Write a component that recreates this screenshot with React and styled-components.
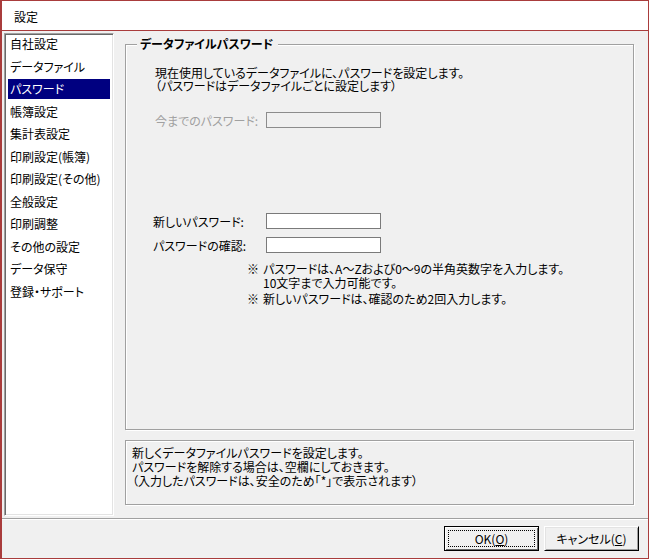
import React from "react";
import styled, { createGlobalStyle } from "styled-components";

const Global = createGlobalStyle`
  html, body { margin: 0; padding: 0; background: #ffffff; }
  body {
    font-family: "Noto Sans CJK JP", "Noto Sans", sans-serif;
    font-size: 12px;
    color: #000;
    font-feature-settings: "palt";
  }
  * { box-sizing: border-box; }
`;

const Window = styled.div`
  width: 649px;
  height: 559px;
  border: 1px solid #a93c3c;
  border-left-width: 2px;
  display: flex;
  flex-direction: column;
  background: #f0f0f0;
`;

const TitleBar = styled.div`
  height: 30px;
  flex: none;
  background: #fff;
  border-bottom: 1px solid #a93c3c;
  display: flex;
  align-items: center;
  padding-left: 12px;
  padding-top: 2px;
  font-size: 12px;
`;

const Main = styled.div`
  flex: 1;
  display: flex;
  gap: 11px;
  padding: 2px 14px 2px 2px;
  min-height: 0;
`;

const ListBox = styled.ul`
  list-style: none;
  margin: 0;
  width: 110px;
  flex: none;
  background: #fff;
  border: 1px solid;
  border-color: #a0a0a0 #fff #fff #a0a0a0;
  box-shadow: inset 1px 1px 0 #696969, inset -1px -1px 0 #e3e3e3;
  padding: 0 3px 1px 3px;
`;

const ListItem = styled.li`
  height: 20px;
  margin-bottom: 2.5px;
  line-height: 19px;
  padding-left: 2px;
  white-space: nowrap;
  background: ${(p) => (p.$selected ? "#000080" : "transparent")};
  color: ${(p) => (p.$selected ? "#fff" : "#000")};
`;

const RightCol = styled.div`
  flex: 1;
  display: flex;
  flex-direction: column;
  padding-top: 11px;
  padding-bottom: 10px;
  gap: 10px;
`;

const GroupBox = styled.div`
  position: relative;
  height: 386px;
  border: 1px solid #a0a0a0;
  box-shadow: inset 1px 1px 0 #fff, 1px 1px 0 #fff;
  padding: 21px 0 0 29px;
`;

const GroupTitle = styled.div`
  position: absolute;
  top: -9px;
  left: 11px;
  padding: 0 5px 0 3px;
  background: #f0f0f0;
  font-weight: bold;
  line-height: 16px;
`;

const Para = styled.p`
  margin: 0;
  line-height: 13px;
  white-space: nowrap;
`;

const FormRow = styled.div`
  display: flex;
  align-items: center;
  height: 16px;
  margin-top: ${(p) => p.$mt}px;
  margin-left: ${(p) => p.$ml || 0}px;
`;

const Label = styled.label`
  width: ${(p) => p.$w}px;
  flex: none;
  white-space: nowrap;
  color: ${(p) => (p.$disabled ? "#a0a0a0" : "#000")};
`;

const TextInput = styled.div`
  width: 115px;
  height: 16px;
  border: 1px solid ${(p) => (p.$disabled ? "#8c8c8c" : "#7a7a7a")};
  background: ${(p) => (p.$disabled ? "#f0f0f0" : "#fff")};
`;

const Note = styled.div`
  display: flex;
  margin-left: 92px;
  margin-top: ${(p) => p.$mt}px;
  line-height: 14px;
  white-space: nowrap;
`;

const NoteMark = styled.span`
  width: 16px;
  flex: none;
`;

const DescBox = styled.div`
  height: 65px;
  border: 1px solid #a0a0a0;
  box-shadow: inset 1px 1px 0 #fff, 1px 1px 0 #fff;
  padding: 5px 0 0 6px;
  line-height: 14px;
  white-space: nowrap;
`;

const Separator = styled.div`
  height: 2px;
  flex: none;
  border-top: 1px solid #a0a0a0;
  border-bottom: 1px solid #fff;
`;

const ButtonBar = styled.div`
  height: 38px;
  flex: none;
  display: flex;
  justify-content: flex-end;
  align-items: flex-start;
  gap: 5px;
  padding: 6px 9px 0 0;
`;

const Button = styled.button`
  position: relative;
  width: 95px;
  height: 25px;
  font-family: inherit;
  font-size: 12px;
  font-feature-settings: "palt";
  color: #000;
  background: #f0f0f0;
  padding: 0;
  border: 1px solid;
  border-color: ${(p) => (p.$default ? "#000" : "#fff #000 #000 #fff")};
  box-shadow: ${(p) =>
    p.$default
      ? "inset 1px 1px 0 #fff, inset -1px -1px 0 #696969"
      : "inset 1px 1px 0 #e3e3e3, inset -1px -1px 0 #a0a0a0"};
  &::after {
    content: "";
    display: ${(p) => (p.$default ? "block" : "none")};
    position: absolute;
    inset: 3px;
    border: 1px dotted #000;
  }
  u { text-decoration: underline; }
`;

const items = [
  "自社設定",
  "データファイル",
  "パスワード",
  "帳簿設定",
  "集計表設定",
  "印刷設定(帳簿)",
  "印刷設定(その他)",
  "全般設定",
  "印刷調整",
  "その他の設定",
  "データ保守",
  "登録・サポート",
];

export default function App() {
  return (
    <>
      <Global />
      <Window>
        <TitleBar>設定</TitleBar>
        <Main>
          <ListBox>
            {items.map((it) => (
              <ListItem key={it} $selected={it === "パスワード"}>
                {it}
              </ListItem>
            ))}
          </ListBox>
          <RightCol>
            <GroupBox>
              <GroupTitle>データファイルパスワード</GroupTitle>
              <Para>現在使用しているデータファイルに、パスワードを設定します。</Para>
              <Para>（パスワードはデータファイルごとに設定します）</Para>
              <FormRow $mt={20}>
                <Label $w={111} $disabled>今までのパスワード:</Label>
                <TextInput $disabled />
              </FormRow>
              <FormRow $mt={85} $ml={-2}>
                <Label $w={113}>新しいパスワード:</Label>
                <TextInput />
              </FormRow>
              <FormRow $mt={8} $ml={-2}>
                <Label $w={113}>パスワードの確認:</Label>
                <TextInput />
              </FormRow>
              <Note $mt={9}>
                <NoteMark>※</NoteMark>
                <div>
                  パスワードは、A～Zおよび0～9の半角英数字を入力します。
                  <br />
                  10文字まで入力可能です。
                </div>
              </Note>
              <Note $mt={2}>
                <NoteMark>※</NoteMark>
                <div>新しいパスワードは、確認のため2回入力します。</div>
              </Note>
            </GroupBox>
            <DescBox>
              新しくデータファイルパスワードを設定します。
              <br />
              パスワードを解除する場合は、空欄にしておきます。
              <br />
              （入力したパスワードは、安全のため「*」で表示されます）
            </DescBox>
          </RightCol>
        </Main>
        <Separator />
        <ButtonBar>
          <Button $default>
            OK(<u>O</u>)
          </Button>
          <Button>
            キャンセル(<u>C</u>)
          </Button>
        </ButtonBar>
      </Window>
    </>
  );
}
